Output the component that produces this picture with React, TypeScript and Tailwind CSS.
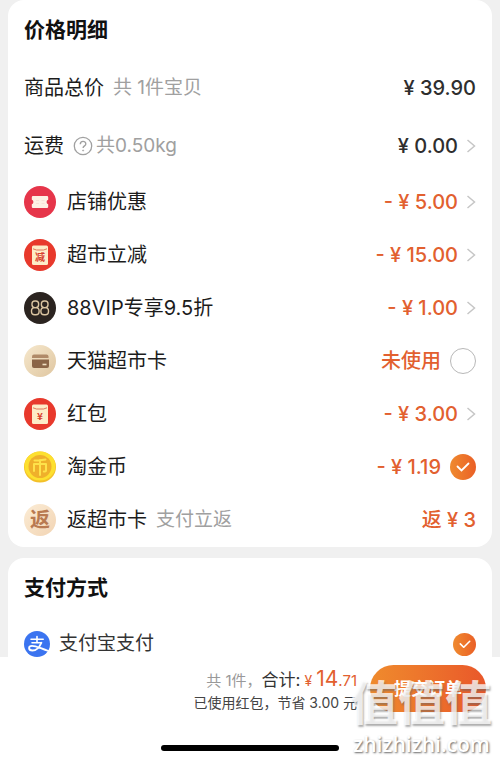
import React from 'react';
import clsx from 'clsx';

type Item = {
  id: string;
  name: string;
  note?: string;
  amount: string;
  icon: React.ReactNode;
  kind: 'link' | 'check' | 'plain';
  checked?: boolean;
};

const CouponIcon = () => (
  <svg viewBox="0 0 32 32" className="size-8 shrink-0" aria-hidden="true">
    <circle cx="16" cy="16" r="16" fill="#e6354a" />
    <path
      d="M9 10h14a1.2 1.2 0 0 1 1.200 1.200v2.600a2.300 2.300 0 0 0 0 4.400v2.600a1.200 1.200 0 0 1-1.200 1.200H9a1.200 1.200 0 0 1-1.200-1.200v-2.600a2.300 2.300 0 0 0 0-4.400v-2.600A1.200 1.200 0 0 1 9 10z"
      fill="#fdf1e4"
    />
    <path d="M12 14.500h3M12 17.500h3M17.500 14.500h3M17.500 17.500h3" stroke="#f6ddd2" strokeWidth="0.8" />
  </svg>
);

const PacketIcon = ({ mark }: { mark: string }) => (
  <svg viewBox="0 0 32 32" className="size-8 shrink-0" aria-hidden="true">
    <circle cx="16" cy="16" r="16" fill="#e8392c" />
    <rect x="8" y="6.500" width="16" height="19.500" rx="1.500" fill="#fdecc8" />
    <path d="M9 9.800l3.500 1.200h7L23 9.800" fill="none" stroke="#dc6a50" strokeWidth="0.9" />
    <text
      x="16"
      y="21.500"
      textAnchor="middle"
      fontSize="10"
      fontWeight="700"
      fill="#d8412f"
      className="font-['Noto_Sans_CJK_SC',sans-serif]"
    >
      {mark}
    </text>
  </svg>
);

const VipIcon = () => (
  <svg viewBox="0 0 32 32" className="size-8 shrink-0" aria-hidden="true">
    <circle cx="16" cy="16" r="16" fill="#2b2420" />
    <g fill="none" stroke="#dcc6a2" strokeWidth="1.400">
      <rect x="8" y="9" width="6.600" height="6.600" rx="2.800" />
      <rect x="7.500" y="15.600" width="7.600" height="7.200" rx="3.200" />
      <rect x="17.400" y="9" width="6.600" height="6.600" rx="2.800" />
      <rect x="16.900" y="15.600" width="7.600" height="7.200" rx="3.200" />
    </g>
  </svg>
);

const CardIcon = () => (
  <svg viewBox="0 0 32 32" className="size-8 shrink-0" aria-hidden="true">
    <defs>
      <linearGradient id="card-bg" x1="0" y1="0" x2="1" y2="1">
        <stop offset="0" stopColor="#f6e8cd" />
        <stop offset="1" stopColor="#dfc6a0" />
      </linearGradient>
    </defs>
    <circle cx="16" cy="16" r="16" fill="url(#card-bg)" />
    <path d="M10 9.500h12.500a2 2 0 0 1 2 2v1.500H8v-1.500a2 2 0 0 1 2-2z" fill="#b08a68" />
    <path d="M8 14.500h17v6.500a2 2 0 0 1-2 2H10a2 2 0 0 1-2-2z" fill="#8b6547" />
    <path d="M18.500 19.500h4" stroke="#f1dfc2" strokeWidth="1.600" />
  </svg>
);

const CoinIcon = () => (
  <svg viewBox="0 0 32 32" className="size-8 shrink-0" aria-hidden="true">
    <ellipse cx="16" cy="16" rx="16" ry="15.500" fill="#f3c02a" />
    <ellipse cx="16" cy="15" rx="15.500" ry="14.500" fill="#fde02f" />
    <circle cx="16" cy="15.500" r="11.500" fill="#efb02b" />
    <g fill="none" stroke="#fee24a" strokeWidth="2" strokeLinecap="round" strokeLinejoin="round">
      <path d="M10.500 9.500q5.500 0 11-1M16 9v15M10 20v-7h12v6.500q0 1-2.200 1" />
    </g>
  </svg>
);

const RebateIcon = () => (
  <span
    aria-hidden="true"
    className="grid size-8 shrink-0 place-items-center rounded-full bg-linear-to-br from-[#fbecd5] to-[#f2d4b3] text-xl leading-8 font-bold text-[#b97a51]"
  >
    返
  </span>
);

const AlipayIcon = () => (
  <svg viewBox="0 0 26 26" className="size-[26px] shrink-0" aria-hidden="true">
    <circle cx="13" cy="13" r="13" fill="#3b74f0" />
    <g fill="none" stroke="#fff" strokeLinecap="round">
      <path d="M7 8.300h12.200M13 5.500v6M8 11.800h9.500" strokeWidth="1.600" />
      <path d="M17.300 11.800c-1.800 4.200-5 7.700-8.800 7.700-4.500 0-4.500-4.700-.5-4.700 4.500 0 8.500 2.700 16.500 5.200" strokeWidth="1.800" />
    </g>
  </svg>
);

const Chevron = () => (
  <svg viewBox="0 0 10 16" className="h-4 w-[10px]" fill="none" aria-hidden="true">
    <path d="M1.500 2l7 6-7 6" stroke="#c6c6c6" strokeWidth="1.500" />
  </svg>
);

const CheckBox = ({ id, checked, small }: { id: string; checked?: boolean; small?: boolean }) => (
  <span className="grid place-items-center">
    <input
      id={id}
      type="checkbox"
      defaultChecked={checked}
      className={clsx(
        'peer col-start-1 row-start-1 appearance-none rounded-full border border-[#b8b8b8] bg-white checked:border-0 checked:bg-linear-to-r checked:from-[#ef8a2f] checked:to-[#ea5f26]',
        small ? 'size-[23px]' : 'size-[26px]',
      )}
    />
    <svg
      viewBox="0 0 14 10"
      className={clsx(
        'pointer-events-none invisible col-start-1 row-start-1 peer-checked:visible',
        small ? 'w-3' : 'w-[14px]',
      )}
      fill="none"
      aria-hidden="true"
    >
      <path d="M1.500 4.500l4 4L12.500 1.500" stroke="#fff" strokeWidth="1.800" strokeLinecap="round" />
    </svg>
  </span>
);

const items: Item[] = [
  { id: 'shop', name: '店铺优惠', amount: '- ¥ 5.00', icon: <CouponIcon />, kind: 'link' },
  { id: 'market', name: '超市立减', amount: '- ¥ 15.00', icon: <PacketIcon mark="减" />, kind: 'link' },
  { id: 'vip', name: '88VIP专享9.5折', amount: '- ¥ 1.00', icon: <VipIcon />, kind: 'link' },
  { id: 'card', name: '天猫超市卡', amount: '未使用', icon: <CardIcon />, kind: 'check' },
  { id: 'packet', name: '红包', amount: '- ¥ 3.00', icon: <PacketIcon mark="¥" />, kind: 'link' },
  { id: 'coin', name: '淘金币', amount: '- ¥ 1.19', icon: <CoinIcon />, kind: 'check', checked: true },
  { id: 'rebate', name: '返超市卡', note: '支付立返', amount: '返 ¥ 3', icon: <RebateIcon />, kind: 'plain' },
];

const ItemRow = ({ item }: { item: Item }) => (
  <li className="flex h-[53px] items-center">
    {item.icon}
    {item.kind === 'check' ? (
      <label htmlFor={item.id} className="ml-[11px]">{item.name}</label>
    ) : (
      <span className="ml-[11px]">{item.name}</span>
    )}
    {item.note && <span className="ml-[9px] text-[19px] text-[#a0a0a0]">{item.note}</span>}
    <span className="ml-auto font-medium text-[#e2602f]">
      {item.kind !== 'link' && item.amount}
      {item.kind === 'link' && (
        <button type="button" className="flex items-center gap-2">
          {item.amount}
          <Chevron />
        </button>
      )}
    </span>
    {item.kind === 'check' && (
      <span className="ml-[9px]">
        <CheckBox id={item.id} checked={item.checked} />
      </span>
    )}
  </li>
);

const App = () => {
  return (
    <div className="flex h-screen flex-col bg-[#f0f0f0] font-[Inter,'Noto_Sans_CJK_SC',sans-serif] text-xl leading-7 text-[#1c1c1c]">
      <main className="min-h-0 flex-1 overflow-hidden px-2">
        {/* Price details */}
        <section className="rounded-2xl bg-white px-4 pb-px">
          <h2 className="flex h-[59px] items-center text-[21px] font-bold text-[#111]">价格明细</h2>
          <div className="flex h-[58px] items-center">
            <span>商品总价</span>
            <span className="ml-[9px] text-[19px] text-[#a0a0a0]">共 1件宝贝</span>
            <span className="ml-auto font-medium text-[#2e2e2e]">¥ 39.90</span>
          </div>
          <div className="flex h-[58px] items-center">
            <span>运费</span>
            <button type="button" aria-label="运费说明" className="ml-[9px]">
              <svg viewBox="0 0 20 20" className="size-5" fill="none" stroke="#a0a0a0" aria-hidden="true">
                <circle cx="10" cy="10" r="8.700" strokeWidth="1.300" />
                <path d="M7.300 8.200c0-3.700 5.500-3.600 5.500-.3 0 2-2.700 2-2.700 4.200" strokeWidth="1.400" />
                <circle cx="10.100" cy="14.500" r="0.500" strokeWidth="1" />
              </svg>
            </button>
            <span className="ml-[3px] text-[19px] text-[#a0a0a0]">共0.50kg</span>
            <button type="button" className="ml-auto flex items-center gap-2 font-medium text-[#2e2e2e]">
              ¥ 0.00
              <Chevron />
            </button>
          </div>
          <ul>
            {items.map((item) => (
              <ItemRow key={item.id} item={item} />
            ))}
          </ul>
        </section>

        {/* Payment method */}
        <section className="mt-[11px] rounded-2xl bg-white px-4 pb-4">
          <h2 className="flex h-[59px] items-center text-[21px] font-bold text-[#111]">支付方式</h2>
          <div className="flex h-[54px] items-center">
            <AlipayIcon />
            <label htmlFor="alipay" className="ml-[9px] flex-1 text-[19px] text-[#333]">支付宝支付</label>
            <CheckBox id="alipay" checked small />
          </div>
        </section>
      </main>

      {/* Submit bar */}
      <footer className="relative bg-white pt-2 pb-[9px]">
        <div className="flex items-start justify-end gap-[13px] pr-[14px]">
          <div className="pt-[3px] text-right text-sm leading-[22px] text-[#444]">
            <p className="flex items-baseline justify-end">
              <span className="text-[15px] text-[#999]">共 1件，</span>
              <span className="text-[17px] text-[#333]">合计:</span>
              <span className="ml-1 text-[#e2602f]">¥</span>
              <span className="ml-1 text-[21px] text-[#e2602f]">14</span>
              <span className="text-[15px] text-[#e2602f]">.71</span>
            </p>
            <p>已使用红包，节省 3.00 元</p>
          </div>
          <button
            type="button"
            className="h-[47px] w-[116px] rounded-full bg-linear-to-r from-[#ef8b2d] to-[#e9572a] text-[17px] font-bold text-white"
          >
            提交订单
          </button>
        </div>
        <div className="mx-auto mt-[31px] h-[6px] w-[178px] rounded-full bg-black" />

        {/* Site watermark */}
        <div className="pointer-events-none absolute right-2 bottom-1 text-center">
          <p className="text-[47px] leading-[58px] font-bold text-white/75 [text-shadow:1px_2px_2px_#6668]">值值值</p>
          <p className="font-['Open_Sans',sans-serif] text-[21px] leading-6 font-semibold text-white [text-shadow:1px_1px_2px_#666]">
            zhizhizhi.com
          </p>
        </div>
      </footer>
    </div>
  );
};

export default App;
